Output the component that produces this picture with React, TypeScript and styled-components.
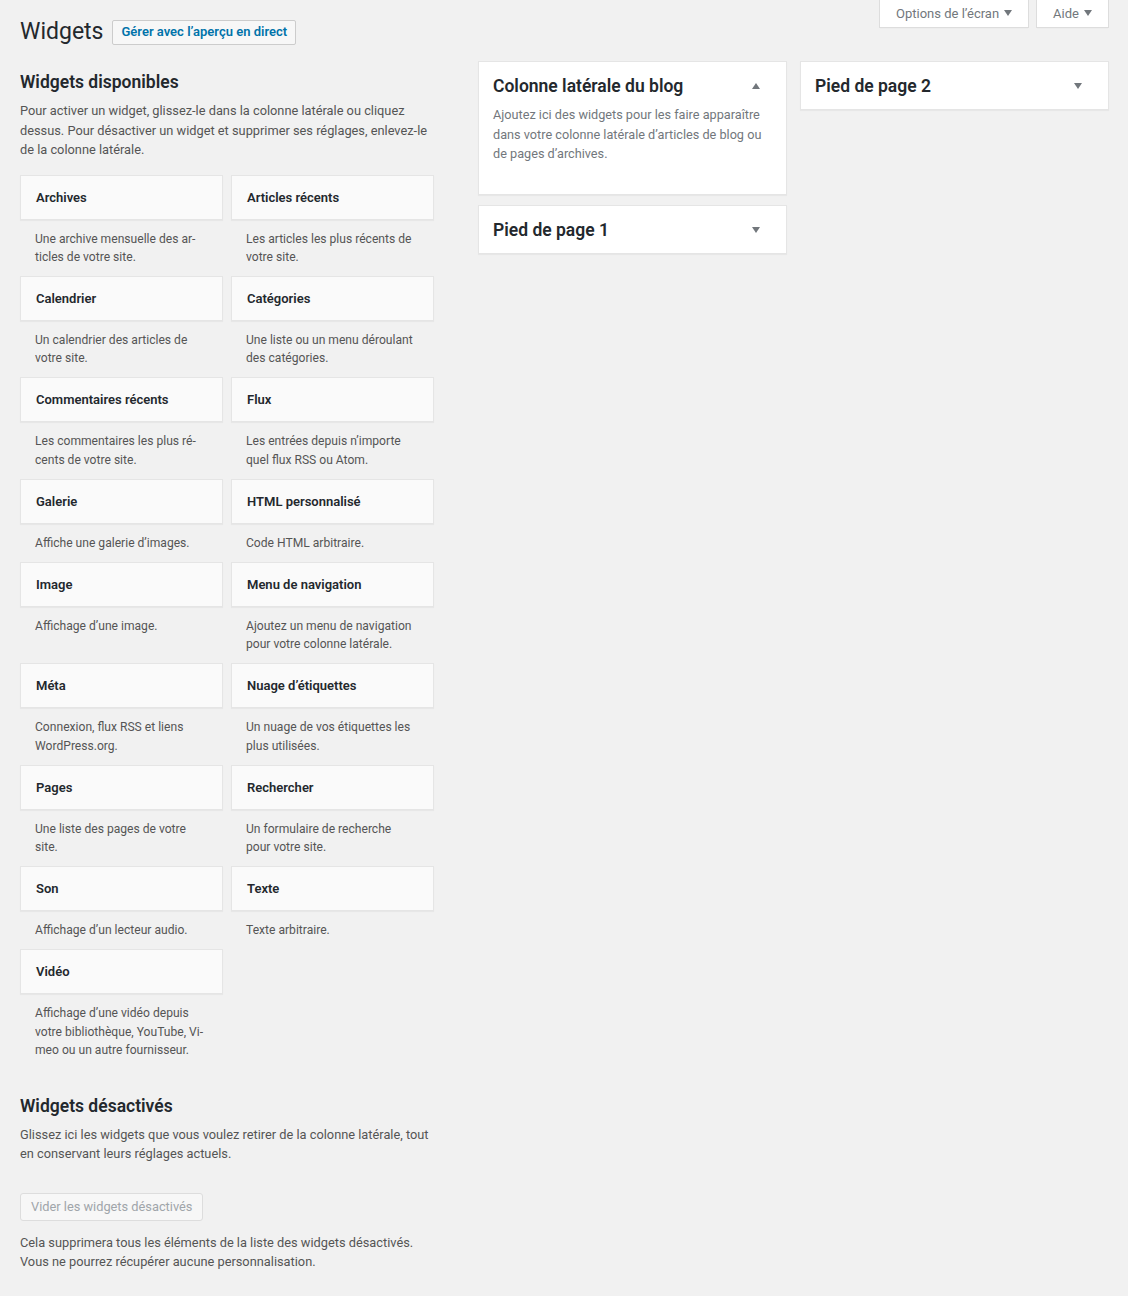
import React from "react";
import styled, { createGlobalStyle } from "styled-components";

const GlobalStyle = createGlobalStyle`
  html, body { margin: 0; padding: 0; background: #f1f1f1; }
  body {
    font-family: Roboto, "Liberation Sans", sans-serif;
    font-size: 13px;
    color: #444;
  }
  * { box-sizing: border-box; }
`;

const Page = styled.div`
  padding: 0 19px 30px 20px;
`;

const Header = styled.div`
  display: flex;
  justify-content: space-between;
  align-items: flex-start;
`;

const TitleGroup = styled.div`
  display: flex;
  align-items: center;
  padding-top: 17px;
  gap: 9px;
`;

const Title = styled.h1`
  margin: 0;
  font-size: 23px;
  font-weight: 400;
  line-height: 30px;
  color: #23282d;
`;

const TitleAction = styled.button`
  font-family: inherit;
  font-size: 13px;
  font-weight: 600;
  color: #0073aa;
  background: #f7f7f7;
  border: 1px solid #ccc;
  border-radius: 2px;
  height: 25px;
  padding: 0 8px;
  line-height: 22px;
`;

const Tabs = styled.div`
  display: flex;
  gap: 7px;
`;

const Tab = styled.button<{ $w: number }>`
  width: ${(p) => p.$w}px;
  height: 28px;
  display: flex;
  align-items: center;
  justify-content: space-between;
  padding: 0 16px 1px 16px;
  background: #fff;
  border: 1px solid #ddd;
  border-top: none;
  box-shadow: 0 1px 1px -1px rgba(0, 0, 0, 0.1);
  font-family: inherit;
  font-size: 13px;
  color: #72777c;
`;

const Arrow = styled.span<{ $up?: boolean }>`
  display: inline-block;
  width: 0;
  height: 0;
  border-left: 4px solid transparent;
  border-right: 4px solid transparent;
  ${(p) =>
    p.$up
      ? "border-bottom: 6px solid #72777c;"
      : "border-top: 6px solid #72777c;"}
`;

const Main = styled.div`
  display: flex;
  align-items: flex-start;
  margin-top: 14px;
`;

const LeftCol = styled.div`
  width: 414px;
  padding-top: 10px;
  margin-right: 44px;
`;

const SectionTitle = styled.h2`
  margin: 0;
  font-size: 17.5px;
  font-weight: 600;
  line-height: 22px;
  color: #23282d;
`;

const Para = styled.p<{ $mt?: number }>`
  margin: ${(p) => p.$mt ?? 8}px 0 0;
  font-size: 12.8px;
  line-height: 19.5px;
  color: #555;
`;

const WidgetGrid = styled.div`
  display: grid;
  grid-template-columns: 203px 203px;
  column-gap: 8px;
  margin-top: 15px;
`;

const WidgetItem = styled.div``;

const WidgetTop = styled.div`
  height: 45px;
  display: flex;
  align-items: center;
  padding: 0 15px;
  background: #fafafa;
  border: 1px solid #e5e5e5;
  box-shadow: 0 1px 1px rgba(0, 0, 0, 0.04);
  font-size: 13px;
  font-weight: 600;
  color: #23282d;
`;

const WidgetDesc = styled.div`
  padding: 10px 18px 10px 15px;
  font-size: 12.1px;
  line-height: 18.2px;
  color: #555;
`;

const DeactHeading = styled(SectionTitle)`
  margin-top: 26px;
`;

const GhostButton = styled.button`
  margin-top: 29px;
  height: 28px;
  padding: 0 10px;
  font-family: inherit;
  font-size: 12.8px;
  color: #a0a5aa;
  background: #f7f7f7;
  border: 1px solid #ddd;
  border-radius: 3px;
`;

const Sidebars = styled.div`
  display: flex;
  gap: 13px;
  align-items: flex-start;
`;

const SideCol = styled.div`
  width: 309px;
  display: flex;
  flex-direction: column;
  gap: 10px;
`;

const SideBox = styled.div`
  background: #fff;
  border: 1px solid #e5e5e5;
  box-shadow: 0 1px 1px rgba(0, 0, 0, 0.04);
`;

const SideHead = styled.div`
  display: flex;
  align-items: center;
  justify-content: space-between;
  padding: 13px 26px 12px 14px;
`;

const SideTitle = styled.h2`
  margin: 0;
  font-size: 17.5px;
  font-weight: 600;
  line-height: 22px;
  color: #23282d;
`;

const SideDesc = styled.p`
  margin: -4px 0 0;
  padding: 0 14px 30px;
  font-size: 12.7px;
  line-height: 19.5px;
  color: #72777c;
`;

const widgets: [string, string][] = [
  ["Archives", "Une archive mensuelle des ar\u00ADticles de votre site."],
  ["Articles récents", "Les articles les plus récents de votre site."],
  ["Calendrier", "Un calendrier des articles de votre site."],
  ["Catégories", "Une liste ou un menu déroulant des catégories."],
  ["Commentaires récents", "Les commentaires les plus ré\u00ADcents de votre site."],
  ["Flux", "Les entrées depuis n’importe quel flux RSS ou Atom."],
  ["Galerie", "Affiche une galerie d’images."],
  ["HTML personnalisé", "Code HTML arbitraire."],
  ["Image", "Affichage d’une image."],
  ["Menu de navigation", "Ajoutez un menu de navigation pour votre colonne latérale."],
  ["Méta", "Connexion, flux RSS et liens WordPress.org."],
  ["Nuage d’étiquettes", "Un nuage de vos étiquettes les plus utilisées."],
  ["Pages", "Une liste des pages de votre site."],
  ["Rechercher", "Un formulaire de recherche pour votre site."],
  ["Son", "Affichage d’un lecteur audio."],
  ["Texte", "Texte arbitraire."],
  ["Vidéo", "Affichage d’une vidéo depuis votre bibliothèque, YouTube, Vi\u00ADmeo ou un autre fournisseur."],
];

export default function App() {
  return (
    <>
      <GlobalStyle />
      <Page>
        <Header>
          <TitleGroup>
            <Title>Widgets</Title>
            <TitleAction>Gérer avec l’aperçu en direct</TitleAction>
          </TitleGroup>
          <Tabs>
            <Tab $w={150}>
              Options de l’écran <Arrow />
            </Tab>
            <Tab $w={73}>
              Aide <Arrow />
            </Tab>
          </Tabs>
        </Header>
        <Main>
          <LeftCol>
            <SectionTitle>Widgets disponibles</SectionTitle>
            <Para>
              Pour activer un widget, glissez-le dans la colonne latérale ou cliquez
              dessus. Pour désactiver un widget et supprimer ses réglages, enlevez-le
              de la colonne latérale.
            </Para>
            <WidgetGrid>
              {widgets.map(([name, desc]) => (
                <WidgetItem key={name}>
                  <WidgetTop>{name}</WidgetTop>
                  <WidgetDesc>{desc}</WidgetDesc>
                </WidgetItem>
              ))}
            </WidgetGrid>
            <DeactHeading>Widgets désactivés</DeactHeading>
            <Para $mt={8}>
              Glissez ici les widgets que vous voulez retirer de la colonne latérale, tout
              en conservant leurs réglages actuels.
            </Para>
            <GhostButton disabled>Vider les widgets désactivés</GhostButton>
            <Para $mt={12}>
              Cela supprimera tous les éléments de la liste des widgets désactivés.
              Vous ne pourrez récupérer aucune personnalisation.
            </Para>
          </LeftCol>
          <Sidebars>
            <SideCol>
              <SideBox>
                <SideHead>
                  <SideTitle>Colonne latérale du blog</SideTitle>
                  <Arrow $up />
                </SideHead>
                <SideDesc>
                  Ajoutez ici des widgets pour les faire apparaître dans votre colonne
                  latérale d’articles de blog ou de pages d’archives.
                </SideDesc>
              </SideBox>
              <SideBox>
                <SideHead>
                  <SideTitle>Pied de page 1</SideTitle>
                  <Arrow />
                </SideHead>
              </SideBox>
            </SideCol>
            <SideCol>
              <SideBox>
                <SideHead>
                  <SideTitle>Pied de page 2</SideTitle>
                  <Arrow />
                </SideHead>
              </SideBox>
            </SideCol>
          </Sidebars>
        </Main>
      </Page>
    </>
  );
}
